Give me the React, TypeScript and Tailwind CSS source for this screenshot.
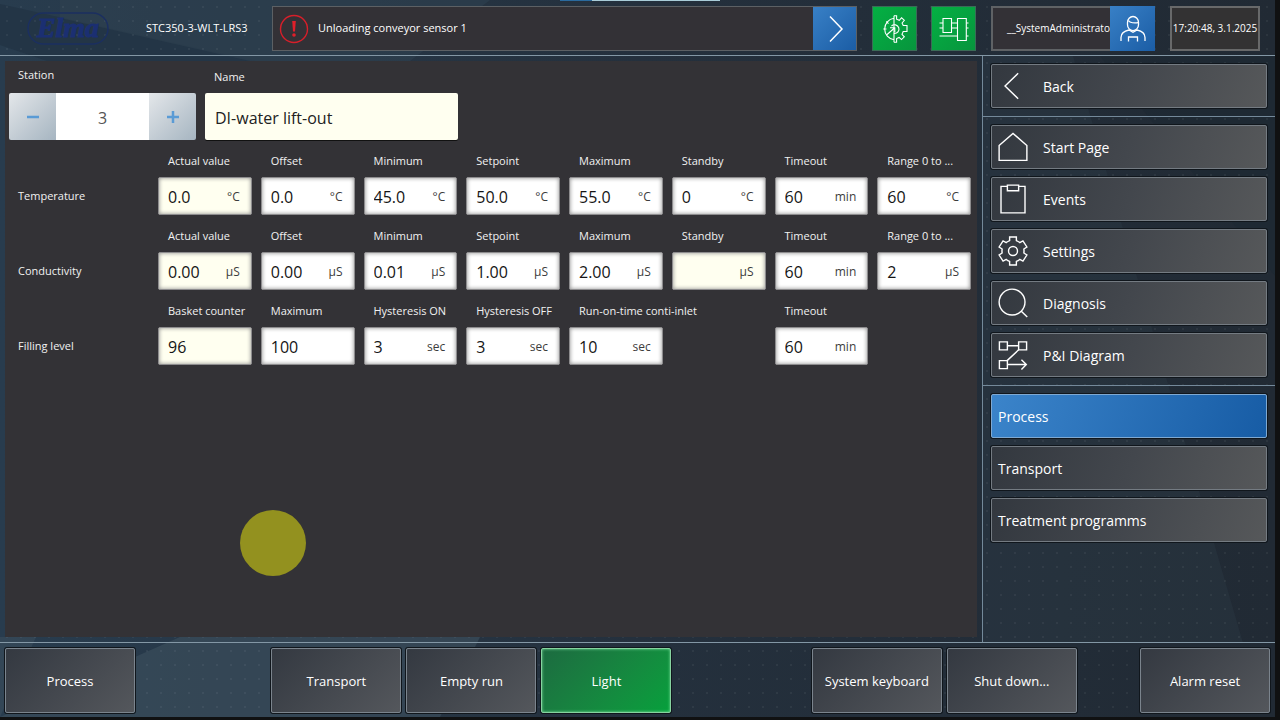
import type { ReactNode } from "react";
import clsx from "clsx";

type FieldSpec = {
  label: string;
  value: string;
  unit?: string;
  readOnly?: boolean;
} | null;

const rows: { title: string; fields: FieldSpec[] }[] = [
  {
    title: "Temperature",
    fields: [
      { label: "Actual value", value: "0.0", unit: "°C", readOnly: true },
      { label: "Offset", value: "0.0", unit: "°C" },
      { label: "Minimum", value: "45.0", unit: "°C" },
      { label: "Setpoint", value: "50.0", unit: "°C" },
      { label: "Maximum", value: "55.0", unit: "°C" },
      { label: "Standby", value: "0", unit: "°C" },
      { label: "Timeout", value: "60", unit: "min" },
      { label: "Range 0 to ...", value: "60", unit: "°C" },
    ],
  },
  {
    title: "Conductivity",
    fields: [
      { label: "Actual value", value: "0.00", unit: "µS", readOnly: true },
      { label: "Offset", value: "0.00", unit: "µS" },
      { label: "Minimum", value: "0.01", unit: "µS" },
      { label: "Setpoint", value: "1.00", unit: "µS" },
      { label: "Maximum", value: "2.00", unit: "µS" },
      { label: "Standby", value: "", unit: "µS", readOnly: true },
      { label: "Timeout", value: "60", unit: "min" },
      { label: "Range 0 to ...", value: "2", unit: "µS" },
    ],
  },
  {
    title: "Filling level",
    fields: [
      { label: "Basket counter", value: "96", readOnly: true },
      { label: "Maximum", value: "100" },
      { label: "Hysteresis ON", value: "3", unit: "sec" },
      { label: "Hysteresis OFF", value: "3", unit: "sec" },
      { label: "Run-on-time conti-inlet", value: "10", unit: "sec" },
      null,
      { label: "Timeout", value: "60", unit: "min" },
      null,
    ],
  },
];

const lineIcon = {
  fill: "none",
  stroke: "currentColor",
  strokeWidth: 1.5,
  "aria-hidden": true,
} as const;

const BackIcon = () => (
  <svg width="30" height="30" viewBox="0 0 32 32" {...lineIcon}>
    <path d="M21.5 2.500 7.500 16l14 13.500" />
  </svg>
);

const HomeIcon = () => (
  <svg width="30" height="30" viewBox="0 0 32 32" {...lineIcon}>
    <path d="M1.2 14.5 16 1.5l14.8 13v15.8H1.200z" />
  </svg>
);

const ClipboardIcon = () => (
  <svg width="30" height="30" viewBox="0 0 32 32" {...lineIcon}>
    <path d="M10 2.500H3.200v28.300h25.600V2.500H22" />
    <path d="M10 1.200h12v6H10z" />
  </svg>
);

const GearIcon = () => (
  <svg width="30" height="30" viewBox="0 0 32 32" {...lineIcon}>
    <circle cx="16" cy="16" r="4.800" />
    <path d="M12.400 1h7.200v3.900c1.300.5 2.500 1.200 3.600 2.100l3.400-1.700 4.200 6.400-3.200 2.200c.2 1.400.2 2.800 0 4.200l3.200 2.200-4.200 6.400-3.400-1.700c-1.100.9-2.300 1.600-3.600 2.100V31h-7.200v-3.900c-1.300-.5-2.500-1.200-3.600-2.100l-3.400 1.700-4.200-6.400 3.200-2.200c-.2-1.400-.2-2.800 0-4.200l-3.200-2.200 4.200-6.400L8.800 7c1.100-.9 2.300-1.600 3.600-2.100z" />
  </svg>
);

const SearchIcon = () => (
  <svg width="30" height="30" viewBox="0 0 32 32" {...lineIcon}>
    <circle cx="15" cy="15" r="13.800" />
    <path d="m24.600 24.600 6.600 6.400" />
  </svg>
);

const DiagramIcon = () => (
  <svg width="30" height="30" viewBox="0 0 32 32" {...lineIcon}>
    <path d="M1.500 2h8.500v8.500H1.500zM22 2h8.500v8.500H22zM1.500 22H10v8.500H1.500z" />
    <path d="M10 6.200h12M22 10.500 9.700 22M10 26.200h20M25 21l5.200 5.200L25 31.400" />
  </svg>
);

const AlertIcon = () => (
  <svg width="30" height="30" viewBox="0 0 30 30" fill="none" aria-hidden="true">
    <circle cx="15" cy="15" r="13.500" stroke="#d71f2a" strokeWidth="1.400" />
    <path d="M13.200 7h3.600l-.8 10.500h-2z" fill="#e01f2a" />
    <circle cx="15" cy="21" r="1.800" fill="#e01f2a" />
  </svg>
);

const NextIcon = () => (
  <svg width="28" height="28" viewBox="0 0 28 28" {...lineIcon}>
    <path d="m9 1.500 12 12.500L9 26.500" />
  </svg>
);

const MachineIcon = () => (
  <svg width="28" height="28" viewBox="0 0 28 28" {...lineIcon} strokeWidth={1.100}>
    <path d="M13 .8v26.400M13 3.300A10.800 10.800 0 0 0 13 24.700" />
    <path d="M13 .8h2.600v3.400l2.700 1.100 2.300-2.600 2.700 2.600-2.200 2.700 1.100 2.500h3.800v6h-3.800l-1.200 2.800 2.300 2.500-2.800 2.800-2.400-2.200-2.500 1.100v3.700H13" />
    <path d="M10.500 11a4.400 4.400 0 1 1 2.500 7.500" />
    <path d="m5.500 20 8-7M9 12.700h4.800v4.600M2.300 14h3.200M5.300 6.500l2.200 2.200" />
  </svg>
);

const TanksIcon = () => (
  <svg width="30" height="28" viewBox="0 0 30 28" {...lineIcon} strokeWidth={1.100}>
    <path d="M4 3.500h8.500v14H4zM18.500 3.500h8.800v22h-8.800z" />
    <path d="M.5 8H4M.5 13H4M12.500 8h6M12.500 13h6M27.300 8h2.200M27.300 13h2.200M.5 21h18M27.300 21h2.200" />
  </svg>
);

const UserIcon = () => (
  <svg width="28" height="28" viewBox="0 0 28 28" {...lineIcon} strokeWidth={1.300}>
    <path d="M8.500 7.500a5.500 6 0 0 1 11 0v2.300a5.500 5.800 0 0 1-11 0z" />
    <path d="M9.500 5.500c1 2 5 2.700 9.700 2.200" />
    <path d="M2 26v-3.500c0-4 3-6.500 8-7.500l4 2.200 4-2.200c5 1 8 3.500 8 7.500V26" />
    <path d="M9.500 26.500V22h9v4.500" />
  </svg>
);

function Backdrop() {
  return (
    <div
      className="pointer-events-none absolute inset-0 overflow-hidden bg-linear-to-r from-[#283c4e] via-[#24303d] to-[#212a34]"
      aria-hidden="true"
    >
      <svg className="h-full w-full" viewBox="0 0 1275 717" preserveAspectRatio="none">
        <path d="M0 4 260 62H50L0 45z" fill="#233546" />
        <path d="M60 0h430l-80 61H250L60 18z" fill="#2f4150" opacity=".6" />
        <path d="M0 717 180 637h300l-40 80z" fill="#3a4d5b" opacity=".7" />
        <path d="M0 637h36L0 717z" fill="#3a4d5b" opacity=".6" />
        <path d="M983 56h90l170 587H983z" fill="#34434f" opacity=".25" />
        <path d="M1100 56h175v220z" fill="#1c2731" opacity=".5" />
      </svg>
      <div className="absolute inset-0 bg-[radial-gradient(#ffffff0d_1px,transparent_1px)] bg-size-[14px_14px]" />
    </div>
  );
}

function SideButton({ icon, active, children }: { icon?: ReactNode; active?: boolean; children: ReactNode }) {
  return (
    <button
      type="button"
      aria-pressed={active}
      className={clsx(
        "flex h-11 w-full items-center gap-[15px] rounded-xs border px-1.5 text-left text-sm text-white shadow-[0_0_0_1px_#10161c]",
        active
          ? "border-[#7fa9d2] bg-linear-[110deg] from-[#3b84ca] to-[#175ca5]"
          : "border-[#747b82] bg-linear-[110deg] from-[#33383f] via-[#43474d] to-[#56585a]",
      )}
    >
      {icon}
      <span className="pt-px">{children}</span>
    </button>
  );
}

function FooterButton({ on, children }: { on?: boolean; children: ReactNode }) {
  return (
    <button
      type="button"
      className={clsx(
        "h-[65px] w-[130px] shrink-0 rounded-xs border pt-0.5 text-[13px] whitespace-nowrap text-white",
        on
          ? "border-[#86d3a0] bg-linear-135 from-[#1c6b40] to-[#05a03c] shadow-[0_0_0_1px_#10161c,inset_0_0_3px_#7fe0a0]"
          : "border-[#7b848d] bg-linear-135 from-[#343941] to-[#54575c] shadow-[0_0_0_1px_#10161c]",
      )}
    >
      {children}
    </button>
  );
}

function Field({ id, spec }: { id: string; spec: NonNullable<FieldSpec> }) {
  return (
    <div className="min-w-0">
      <label htmlFor={id} className="block h-4 pl-2.5 text-[11px] leading-4 whitespace-nowrap text-[#f1f1f1]">
        {spec.label}
      </label>
      <div
        className={clsx(
          "mt-2 flex h-[38px] items-center rounded-xs border border-[#8d8c8e] pt-0.5 pr-[11px] pl-[9px] shadow-[inset_0_0_4px_#8a8a8a]",
          spec.readOnly ? "bg-[#fffff0]" : "bg-white",
        )}
      >
        <input
          id={id}
          defaultValue={spec.value}
          readOnly={spec.readOnly}
          className="w-0 min-w-0 flex-1 bg-transparent text-base text-[#151515] outline-none"
        />
        {spec.unit && <span className="text-xs text-[#3c3c3c]">{spec.unit}</span>}
      </div>
    </div>
  );
}

export default function App() {
  return (
    <div className="flex min-h-screen bg-[#101112] pr-[5px] pb-[3px] font-['Open_Sans','Noto_Sans',sans-serif]">
      <div className="relative flex min-w-0 flex-1">
        <Backdrop />
        <div className="absolute top-0 left-[560px] flex h-px w-40" aria-hidden="true">
          <div className="w-8 bg-[#2a6a9e]" />
          <div className="flex-1 bg-[#a9ccd8]" />
        </div>

        <div className="relative flex min-w-0 flex-1 flex-col">
          <header className="flex h-14 shrink-0 items-center border-b border-[#8397a5] pt-0.5 pr-[15px] text-[11px] text-white">
            <div className="flex w-[272px] shrink-0 items-center gap-[37px] pl-[27px]">
              <svg width="82" height="34" viewBox="0 0 82 34" role="img" aria-label="Elma">
                <rect x="1" y="1" width="80" height="31" rx="15.500" fill="none" stroke="#1b2f60" strokeWidth="1.500" />
                <text
                  x="41"
                  y="25"
                  textAnchor="middle"
                  fontFamily="Liberation Serif, serif"
                  fontSize="28"
                  fontWeight="bold"
                  fontStyle="italic"
                  fill="#1b2f72"
                  stroke="#1b2f72"
                  strokeWidth="1"
                >
                  Elma
                </text>
              </svg>
              <span className="whitespace-nowrap">STC350-3-WLT-LRS3</span>
            </div>
            <div className="flex h-[45px] min-w-0 flex-1 items-center border border-[#5c6064] bg-[#333136]">
              <div className="flex min-w-0 flex-1 items-center gap-[9px] pl-1.5">
                <AlertIcon />
                <span>Unloading conveyor sensor 1</span>
              </div>
              <button
                type="button"
                aria-label="Next message"
                className="flex h-full w-[43px] items-center justify-center bg-linear-to-br from-[#3880c6] to-[#1b5da5]"
              >
                <NextIcon />
              </button>
            </div>
            <button
              type="button"
              aria-label="Machine status"
              className="ml-[15px] flex h-[45px] w-[45px] items-center justify-center border border-[#3b6b57] bg-linear-to-br from-[#04b043] to-[#07953d]"
            >
              <MachineIcon />
            </button>
            <button
              type="button"
              aria-label="Tank status"
              className="ml-3.5 flex h-[45px] w-[45px] items-center justify-center border border-[#3b6b57] bg-linear-to-br from-[#04b043] to-[#07953d]"
            >
              <TanksIcon />
            </button>
            <div className="ml-[15px] flex h-[45px] w-[164px] items-center border-2 border-[#5f6265] bg-[#333136]">
              <span className="min-w-0 flex-1 overflow-hidden pl-3.5 text-[10px] whitespace-nowrap">
                __SystemAdministrator
              </span>
              <button
                type="button"
                aria-label="User"
                className="-my-0.5 -mr-0.5 flex h-[45px] w-[45px] shrink-0 items-center justify-center bg-linear-to-br from-[#3880c6] to-[#1b5da5]"
              >
                <UserIcon />
              </button>
            </div>
            <time className="ml-[15px] flex h-[45px] w-[90px] items-center justify-center border-2 border-[#68696a] bg-[#333233] text-[10px] whitespace-nowrap">
              17:20:48, 3.1.2025
            </time>
          </header>

          <div className="flex min-h-0 flex-1">
            <main className="m-[5px] min-w-0 flex-1 bg-[#333236] pr-1.5 pb-8 pl-1">
              <div className="flex items-end gap-[9px] pt-1.5">
                <div>
                  <label htmlFor="station" className="block h-[26px] pl-[9px] text-[11px] leading-4 text-[#f1f1f1]">
                    Station
                  </label>
                  <div className="flex h-[47px] w-[187px] overflow-hidden rounded-xs">
                    <button
                      type="button"
                      aria-label="Previous station"
                      className="flex w-[47px] items-center justify-center bg-linear-to-br from-[#e4e7ea] to-[#a6b5c1] text-[#5a9bd5]"
                    >
                      <svg width="14" height="14" viewBox="0 0 14 14" stroke="currentColor" strokeWidth="2.500" aria-hidden="true">
                        <path d="M1 7h12" />
                      </svg>
                    </button>
                    <input
                      id="station"
                      defaultValue="3"
                      className="w-0 min-w-0 flex-1 bg-white pt-0.5 text-center text-base text-[#555] outline-none"
                    />
                    <button
                      type="button"
                      aria-label="Next station"
                      className="flex w-[47px] items-center justify-center bg-linear-to-br from-[#e4e7ea] to-[#a6b5c1] text-[#5a9bd5]"
                    >
                      <svg width="14" height="14" viewBox="0 0 14 14" stroke="currentColor" strokeWidth="2.500" aria-hidden="true">
                        <path d="M1 7h12M7 1v12" />
                      </svg>
                    </button>
                  </div>
                </div>
                <div>
                  <label htmlFor="name" className="block h-6 pl-[9px] text-[11px] leading-4 text-[#f1f1f1]">
                    Name
                  </label>
                  <input
                    id="name"
                    defaultValue="DI-water lift-out"
                    readOnly
                    className="block h-[47px] w-[253px] rounded-xs bg-[#fffff0] px-2.5 pt-0.5 text-base text-[#222] shadow-[0_1px_0_#111] outline-none"
                  />
                </div>
              </div>

              <div className="mt-[13px] flex flex-col gap-[13px]">
                {rows.map((row, r) => (
                  <section
                    key={row.title}
                    aria-label={row.title}
                    className="grid grid-cols-[140px_repeat(8,minmax(0,1fr))] gap-x-[9px]"
                  >
                    <h2 className="self-end pl-[9px] text-[11px] leading-[38px] text-[#f1f1f1]">{row.title}</h2>
                    {row.fields.map((spec, c) =>
                      spec ? <Field key={c} id={`field-${r}-${c}`} spec={spec} /> : <div key={c} />,
                    )}
                  </section>
                ))}
              </div>
            </main>

            <nav className="flex w-[293px] shrink-0 flex-col border-l border-[#74899a]" aria-label="Menu">
              <div className="border-b border-[#74899a] px-2 py-2">
                <SideButton icon={<BackIcon />}>Back</SideButton>
              </div>
              <div className="flex flex-col gap-2 border-b border-[#74899a] px-2 py-2">
                <SideButton icon={<HomeIcon />}>Start Page</SideButton>
                <SideButton icon={<ClipboardIcon />}>Events</SideButton>
                <SideButton icon={<GearIcon />}>Settings</SideButton>
                <SideButton icon={<SearchIcon />}>Diagnosis</SideButton>
                <SideButton icon={<DiagramIcon />}>P&amp;I Diagram</SideButton>
              </div>
              <div className="flex flex-col gap-2 px-2 py-2">
                <SideButton active>Process</SideButton>
                <SideButton>Transport</SideButton>
                <SideButton>Treatment programms</SideButton>
              </div>
            </nav>
          </div>

          <footer className="flex h-[75px] shrink-0 items-start border-t border-[#8397a5] px-[5px] pt-[5px]">
            <FooterButton>Process</FooterButton>
            <div className="flex-[136]" />
            <div className="flex gap-[5px]">
              <FooterButton>Transport</FooterButton>
              <FooterButton>Empty run</FooterButton>
              <FooterButton on>Light</FooterButton>
            </div>
            <div className="flex-[140]" />
            <div className="flex gap-[5px]">
              <FooterButton>System keyboard</FooterButton>
              <FooterButton>Shut down...</FooterButton>
            </div>
            <div className="flex-[63]" />
            <FooterButton>Alarm reset</FooterButton>
          </footer>
        </div>

        <div
          className="pointer-events-none absolute top-[510px] left-60 h-[66px] w-[66px] rounded-full bg-[#93911f]"
          aria-hidden="true"
        />
      </div>
    </div>
  );
}
